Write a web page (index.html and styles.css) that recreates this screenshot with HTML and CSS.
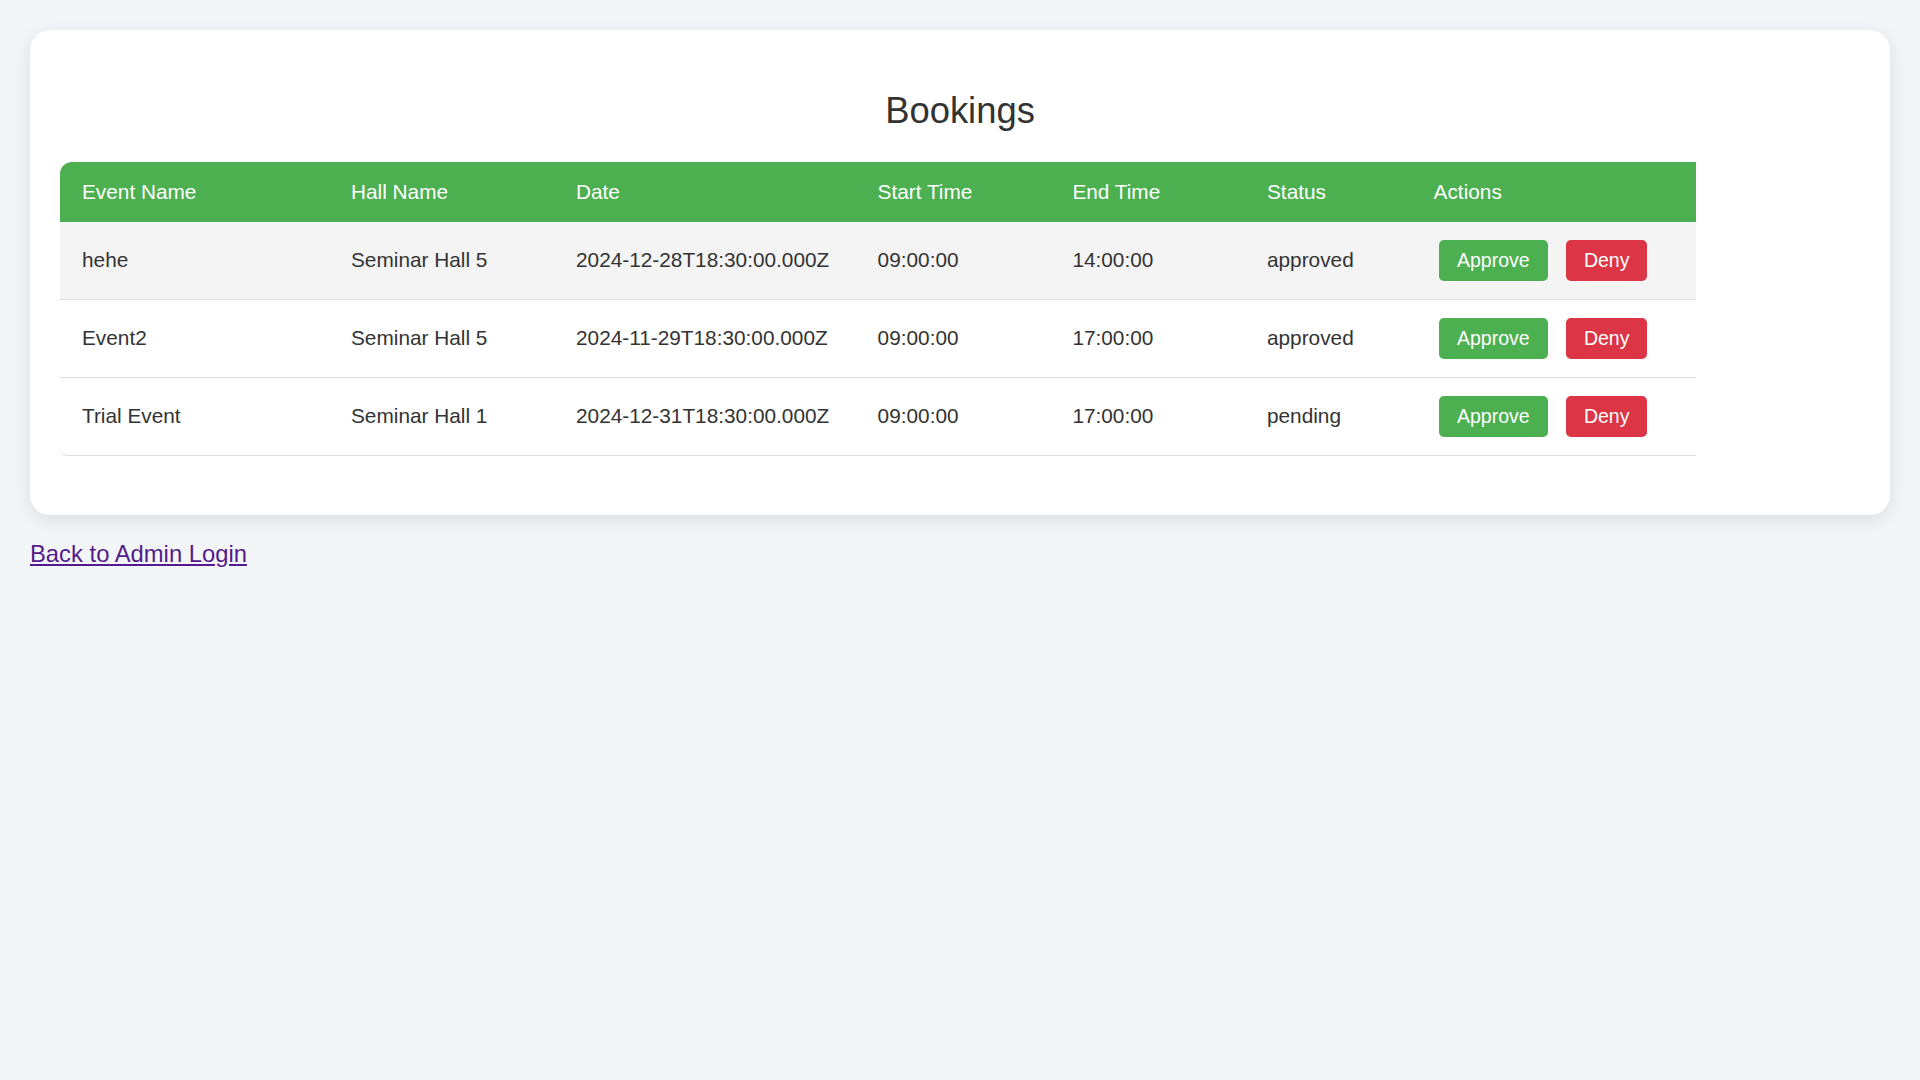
FILE: index.html
```html
<!DOCTYPE html>
<html lang="en">
<head>
<meta charset="utf-8">
<title>Bookings</title>
<link rel="stylesheet" href="styles.css">
</head>
<body>
  <div class="card">
    <h2 class="title">Bookings</h2>
    <table class="bookings">
      <colgroup>
        <col class="c-event">
        <col class="c-hall">
        <col class="c-date">
        <col class="c-start">
        <col class="c-end">
        <col class="c-status">
        <col class="c-actions">
      </colgroup>
      <thead>
        <tr>
          <th>Event Name</th>
          <th>Hall Name</th>
          <th>Date</th>
          <th>Start Time</th>
          <th>End Time</th>
          <th>Status</th>
          <th>Actions</th>
        </tr>
      </thead>
      <tbody>
        <tr class="hovered">
          <td>hehe</td>
          <td>Seminar Hall 5</td>
          <td>2024-12-28T18:30:00.000Z</td>
          <td>09:00:00</td>
          <td>14:00:00</td>
          <td>approved</td>
          <td><div class="actions"><button class="btn approve">Approve</button><button class="btn deny">Deny</button></div></td>
        </tr>
        <tr>
          <td>Event2</td>
          <td>Seminar Hall 5</td>
          <td>2024-11-29T18:30:00.000Z</td>
          <td>09:00:00</td>
          <td>17:00:00</td>
          <td>approved</td>
          <td><div class="actions"><button class="btn approve">Approve</button><button class="btn deny">Deny</button></div></td>
        </tr>
        <tr>
          <td>Trial Event</td>
          <td>Seminar Hall 1</td>
          <td>2024-12-31T18:30:00.000Z</td>
          <td>09:00:00</td>
          <td>17:00:00</td>
          <td>pending</td>
          <td><div class="actions"><button class="btn approve">Approve</button><button class="btn deny">Deny</button></div></td>
        </tr>
      </tbody>
    </table>
  </div>
  <a class="back" href="#">Back to Admin Login</a>
</body>
</html>
```

FILE: styles.css
```css
html, body {
  margin: 0;
}

html::-webkit-scrollbar {
  width: 15px;
  background: #f1f1f1;
}

html::-webkit-scrollbar-thumb {
  background: #c1c1c1;
}

html::-webkit-scrollbar-button:single-button {
  display: block;
  height: 17px;
  background-color: #f1f1f1;
}

html::-webkit-scrollbar-button:single-button:vertical:decrement {
  background-image:
    linear-gradient(to bottom right, transparent 50%, #a3a3a3 50%),
    linear-gradient(to bottom left, transparent 50%, #a3a3a3 50%);
  background-size: 4px 4px, 4px 4px;
  background-position: 3.5px 6px, 7.5px 6px;
  background-repeat: no-repeat;
}

html::-webkit-scrollbar-button:single-button:vertical:increment {
  background-image:
    linear-gradient(to top right, transparent 50%, #505050 50%),
    linear-gradient(to top left, transparent 50%, #505050 50%);
  background-size: 4px 4px, 4px 4px;
  background-position: 3.5px 7px, 7.5px 7px;
  background-repeat: no-repeat;
}

body {
  background: #f3f6f9;
  font-family: "Liberation Sans", Arial, sans-serif;
  color: #333;
  padding: 29px 15px 49px 30px;
  min-height: 100vh;
}

.card {
  width: 1860px;
  box-sizing: border-box;
  background: #fff;
  border-radius: 20px;
  box-shadow: 0 5px 20px rgba(0, 0, 0, 0.1);
  padding: 30px 30px 59.7px 30px;
  margin-top: 1px;
}

.title {
  margin: 29.5px 0 30px 0;
  font-size: 36.4px;
  font-weight: normal;
  text-align: center;
  color: #333;
  line-height: normal;
}

.bookings {
  border-collapse: separate;
  border-spacing: 0;
  table-layout: fixed;
  width: 1636px;
  font-size: 20.8px;
}

.c-event { width: 269px; }
.c-hall { width: 225px; }
.c-date { width: 301.6px; }
.c-start { width: 194.8px; }
.c-end { width: 194.6px; }
.c-status { width: 166.6px; }
.c-actions { width: 284.4px; }

.bookings th,
.bookings td {
  padding: 18px 22px;
  text-align: left;
  line-height: normal;
  white-space: nowrap;
}

.bookings th {
  background: #4caf50;
  color: #fff;
  font-weight: normal;
  height: 24px;
}

.bookings th:first-child {
  border-top-left-radius: 12px;
}

.bookings td {
  border-bottom: 1px solid #ddd;
  color: #333;
  vertical-align: middle;
}

.bookings tr:last-child td:first-child {
  border-bottom-left-radius: 8px;
}

.bookings tr.hovered td {
  background: #f4f4f4;
}

.actions {
  display: flex;
  align-items: center;
  gap: 18.3px;
  margin-left: 5.4px;
}

.btn {
  border: none;
  border-radius: 5px;
  color: #fff;
  font-family: "Liberation Sans", Arial, sans-serif;
  font-size: 19.5px;
  line-height: 22.4px;
  padding: 9.3px 18px;
  cursor: pointer;
}

.approve {
  background: #4caf50;
}

.deny {
  background: #dc3545;
}

.back {
  display: inline-block;
  margin-top: 25px;
  font-size: 23.8px;
  color: #551a8b;
  text-decoration: underline;
}
```
